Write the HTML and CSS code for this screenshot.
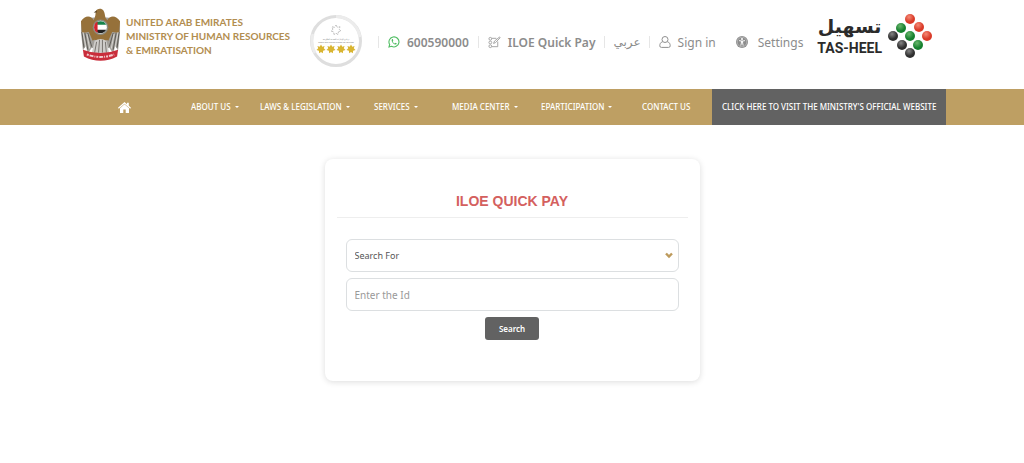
FILE: index.html
```html
<!DOCTYPE html>
<html lang="en">
<head>
  <meta charset="UTF-8" />
  <meta name="viewport" content="width=device-width, initial-scale=1.0"/>
  <title>ILOE Quick Pay</title>
  <link rel="stylesheet" href="styles.css">
</head>
<body>
  <header class="header">
    <a href="#" class="ministry">
      <svg class="emblem" viewBox="0 0 42 54" aria-hidden="true">
        <!-- wings -->
        <path d="M17 9 C10 9 5 10 1 14 L1 24 L3 43 L6 38 L8 46 L12 40 L21 44 L30 40 L34 46 L36 38 L39 43 L41 24 L41 14 C37 10 32 9 25 9 Z" fill="#a3a09b"/>
        <path d="M14 12 C12 7 5 6 1 13 L2 25 L9 24 L13 33 L17 30 L21 34 L25 30 L29 33 L33 24 L40 25 L41 13 C37 6 30 7 28 12 Z" fill="#96713a"/>
        <path d="M2 24 L4 40 M5 25 L8 42 M8 25 L12 39 M40 24 L38 40 M37 25 L34 42 M34 25 L30 39" stroke="#5d5a55" stroke-width="1" fill="none"/>
        <path d="M3 24 L6 39 M7 26 L10 41 M39 24 L36 39 M35 26 L32 41" stroke="#d8d6d2" stroke-width="1" fill="none"/>
        <!-- head and body -->
        <path d="M14 12 C16 8 16 5 16 3 C17 0 22 -1 24 2 C26 5 25 9 28 12 L29 31 L23 35 L13 31 Z" fill="#96713a"/>
        <path d="M17 2 L14 4 L17 4 Z" fill="#4b3a21"/>
        <path d="M15 33 Q21 29 27 33 L30 46 L12 46 Z" fill="#cfcdca"/>
        <path d="M17 34 L15 45 M20 32 L19 45 M23 32 L23 45 M26 34 L27 45" stroke="#77736e" fill="none"/>
        <circle cx="21" cy="19" r="8" fill="#8b8a80"/>
        <circle cx="21" cy="19" r="6.5" fill="#fff"/>
        <path d="M15.2 16.5 A6.5 6.5 0 0 1 26.8 16.5 Z" fill="#15834b"/>
        <path d="M15.2 21.5 A6.5 6.5 0 0 0 26.8 21.5 Z" fill="#222"/>
        <path d="M18 13.2 A6.5 6.5 0 0 0 18 24.8 Z" fill="#d4242f"/>
        <!-- ribbon -->
        <path d="M3 42 Q21 49 39 42 L38 49 Q21 58 4 49 Z" fill="#c92d3b"/>
        <path d="M7 47 Q21 52 35 47" stroke="#f2c9cc" stroke-width="2" stroke-dasharray="2 1 4 1 1 1" fill="none"/>
      </svg>
      <span class="ministry-name">UNITED ARAB EMIRATES<br>MINISTRY OF HUMAN RESOURCES<br>&amp; EMIRATISATION</span>
    </a>

    <svg class="seal" viewBox="0 0 54 54" role="img" aria-label="Four star rating">
      <defs>
        <path id="star" d="M0 -5 L1.4 -2.6 L4 -3.3 L3.1 -.7 L5 1 L2.4 1.9 L2 4.6 L0 3.2 L-2 4.6 L-2.4 1.9 L-5 1 L-3.1 -.7 L-4 -3.3 L-1.4 -2.6 Z"/>
      </defs>
      <circle cx="27" cy="27" r="24.5" fill="#fff" stroke="#dedede" stroke-width="3"/>
      <path d="M27 2.5 A24.5 24.5 0 0 1 51 23 M6 39 A24.5 24.5 0 0 1 4 20" fill="none" stroke="#ececec" stroke-width="3"/>
      <use href="#star" x="27" y="16" fill="none" stroke="#c4c4c4" stroke-width="1" stroke-dasharray="3 1"/>
      <text x="27" y="26" class="seal-text">برنامج الإمارات للخدمة الحكومية</text>
      <text x="27" y="29" class="seal-text">Global Star Rating System for Services</text>
      <g fill="#d9b531">
        <use href="#star" transform="translate(12 35) scale(.9)"/>
        <use href="#star" transform="translate(22 35) scale(.9)"/>
        <use href="#star" transform="translate(32 35) scale(.9)"/>
        <use href="#star" transform="translate(42 35) scale(.9)"/>
      </g>
    </svg>

    <div class="tools">
      <a href="#" class="tool strong">
        <svg class="icon-sm" viewBox="0 0 12 12" aria-hidden="true">
          <path d="M1 11 L1.7 8.5 A5 5 0 1 1 3.6 10.3 Z" fill="none" stroke="#4fbd62" stroke-width="1.1"/>
          <path d="M4.2 3.1 C3 4.2 3.8 6 5 7.2 C6.4 8.6 8 9.2 9 7.8 L7.5 6.8 L6.7 7.5 C5.8 7.1 5 6.3 4.7 5.5 L5.3 4.7 L4.8 3.1 Z" fill="#4fbd62"/>
        </svg>
        600590000
      </a>
      <a href="#" class="tool strong">
        <svg class="icon-md" viewBox="0 0 14 14" fill="none" stroke="#a0a0a0" stroke-width="1" aria-hidden="true">
          <circle cx="2.5" cy="3" r="1.5"/>
          <circle cx="2.5" cy="7" r="1.5"/>
          <circle cx="2.5" cy="11" r="1.5"/>
          <path d="M4 2.5 H9 M4 11.5 H10.5 V6 M6 8 L7 5.5 L12.5 1 L13 2 L8 7.2 Z"/>
        </svg>
        ILOE Quick Pay
      </a>
      <a href="#" class="tool arabic" lang="ar">عربي</a>
      <a href="#" class="tool">
        <svg class="icon-sm" viewBox="0 0 12 12" fill="none" stroke="#909090" stroke-width="1" aria-hidden="true">
          <circle cx="6" cy="3.5" r="3"/>
          <path d="M3.6 5.8 C1.5 6.2 .8 8 .8 9.8 Q.8 11.4 2.4 11.4 H9.6 Q11.2 11.4 11.2 9.8 C11.2 8 10.5 6.2 8.4 5.8"/>
        </svg>
        Sign in
      </a>
      <a href="#" class="tool settings">
        <svg class="icon-sm" viewBox="0 0 12 12" aria-hidden="true">
          <circle cx="6" cy="6" r="6" fill="#8c8c8c"/>
          <circle cx="6" cy="6" r="4.8" fill="none" stroke="#c9c9c9" stroke-width=".6"/>
          <circle cx="6" cy="2.9" r="1" fill="#fff"/>
          <path d="M3 4.6 L6 5.1 L9 4.6 M5.4 5 V7 L4.8 9.6 M6.6 5 V7 L7.2 9.6 M6 5 V7" fill="none" stroke="#fff" stroke-width=".9"/>
        </svg>
        Settings
      </a>
    </div>

    <a href="#" class="tasheel">
      <span class="tasheel-name">
        <span class="tasheel-ar" lang="ar">تسهيل</span>
        <span class="tasheel-en">TAS-HEEL</span>
      </span>
      <svg class="dots" viewBox="0 0 44 46" aria-hidden="true">
        <defs>
          <radialGradient id="red" cx=".4" cy=".3"><stop offset="0" stop-color="#f58a76"/><stop offset="1" stop-color="#d93a28"/></radialGradient>
          <radialGradient id="green" cx=".4" cy=".3"><stop offset="0" stop-color="#69b56c"/><stop offset="1" stop-color="#16802f"/></radialGradient>
          <radialGradient id="black" cx=".4" cy=".3"><stop offset="0" stop-color="#858585"/><stop offset="1" stop-color="#2f2f2f"/></radialGradient>
        </defs>
        <g fill="url(#red)"><circle cx="22" cy="6" r="5"/><circle cx="31" cy="14" r="5"/><circle cx="39" cy="23" r="5"/></g>
        <g fill="url(#green)"><circle cx="13" cy="15" r="5"/><circle cx="22" cy="23" r="5"/><circle cx="30" cy="32" r="5"/></g>
        <g fill="url(#black)"><circle cx="5" cy="23" r="5"/><circle cx="14" cy="32" r="5"/><circle cx="22" cy="40" r="5"/></g>
      </svg>
    </a>
  </header>

  <nav class="navbar">
    <a href="#" aria-label="Home">
      <svg class="home" viewBox="0 0 13 11" fill="#fff" aria-hidden="true">
        <path d="M6.5 0 L9 2.2 V.8 H10.8 V3.8 L13 5.8 L12.2 6.7 L6.5 1.7 L.8 6.7 L0 5.8 Z"/>
        <path d="M6.5 2.2 L11 6.2 V11 H7.7 V7.5 H5.3 V11 H2 V6.2 Z"/>
      </svg>
    </a>
    <a href="#" class="drop">ABOUT US</a>
    <a href="#" class="drop">LAWS &amp; LEGISLATION</a>
    <a href="#" class="drop">SERVICES</a>
    <a href="#" class="drop">MEDIA CENTER</a>
    <a href="#" class="drop">EPARTICIPATION</a>
    <a href="#">CONTACT US</a>
    <a href="#" class="official">CLICK HERE TO VISIT THE MINISTRY'S OFFICIAL WEBSITE</a>
  </nav>

  <main class="card">
    <h1>ILOE QUICK PAY</h1>
    <form class="search-form">
      <select class="field" aria-label="Search For">
        <option>Search For</option>
      </select>
      <input class="field" type="text" aria-label="Id" placeholder="Enter the Id">
      <button type="button" class="search">Search</button>
    </form>
  </main>
</body>
</html>
```

FILE: styles.css
```css
* { box-sizing: border-box; }

body {
  margin: 0;
  background: #fff;
  font-family: "Noto Sans", "DejaVu Sans", sans-serif;
  font-size: 12px;
  color: #555;
}

a {
  color: inherit;
  text-decoration: none;
}

svg {
  display: block;
  flex: none;
}

/* header */
.header {
  display: flex;
  align-items: flex-start;
  padding: 8px 80px 0;
  min-height: 89px;
  white-space: nowrap;
}

.ministry {
  display: flex;
  flex: none;
  gap: 5px;
  width: 229px;
}

.emblem {
  width: 41px;
  height: 54px;
}

.ministry-name {
  padding-top: 7px;
  font-family: Lato, sans-serif;
  font-size: 10px;
  line-height: 14px;
  font-weight: bold;
  color: #b28d50;
}

.seal {
  width: 54px;
  height: 54px;
  margin-top: 6px;
}

.seal-text {
  font-size: 2px;
  text-anchor: middle;
  fill: #777;
}

.tools {
  display: flex;
  margin-top: 28px;
  padding-left: 15px;
}

.tool {
  display: flex;
  align-items: center;
  height: 12px;
  padding: 0 9px;
  border-left: 1px solid #e6e6e6;
  gap: 7px;
  color: #8c8c8c;
}

.strong { font-weight: 600; }

.arabic {
  padding: 0 8px;
  font-family: "DejaVu Sans", sans-serif;
}

.settings {
  border-left: 0;
  padding-left: 11px;
  gap: 10px;
}

.icon-sm {
  width: 12px;
  height: 12px;
}

.icon-md {
  width: 13px;
  height: 13px;
}

.tasheel {
  display: flex;
  gap: 6px;
  margin-left: auto;
  margin-top: 5px;
  margin-right: 12px;
  color: #2b2b2b;
}

.tasheel-name {
  display: flex;
  flex-direction: column;
  align-items: center;
  font-weight: bold;
}

.tasheel-ar {
  font-family: "DejaVu Sans", sans-serif;
  font-size: 19px;
  line-height: 26px;
}

.tasheel-en {
  font-family: Roboto, sans-serif;
  font-size: 14px;
  line-height: 18px;
}

.dots {
  width: 44px;
  height: 46px;
}

/* navigation */
.navbar {
  display: grid;
  grid-template-columns: 73px 69px 114px 78px 89px 101px 70px auto;
  justify-content: start;
  align-items: center;
  height: 36px;
  padding-left: 118px;
  background: #be9f63;
  color: #fff;
  font-size: 8px;
  font-weight: 500;
  line-height: 10px;
  white-space: nowrap;
}

.home {
  width: 13px;
  height: 11px;
}

.drop::after {
  content: "";
  display: inline-block;
  margin-left: 4px;
  vertical-align: 2px;
  border: 2px solid transparent;
  border-top-color: #fff;
  border-bottom: 0;
}

.official {
  padding: 0 10px;
  line-height: 36px;
  background: #626262;
}

/* quick pay card */
.card {
  width: 90%;
  max-width: 375px;
  margin: 34px auto;
  padding: 31px 12px 41px;
  border-radius: 8px;
  background: #fff;
  box-shadow: 0 1px 6px rgba(0,0,0,0.14);
}

h1 {
  margin: 0;
  padding-bottom: 4px;
  border-bottom: 1px solid #eee;
  text-align: center;
  font-family: "Liberation Sans", Arial, sans-serif;
  font-size: 14px;
  line-height: 23px;
  color: #d4605e;
}

.search-form {
  display: flex;
  flex-direction: column;
  align-items: center;
  gap: 6px;
  padding: 21px 9px 0;
}

.field {
  width: 100%;
  height: 33px;
  padding: 0 8px;
  border: 1px solid #dcdfe1;
  border-radius: 6px;
  background: #fff;
  font-family: inherit;
  font-size: 10px;
  color: #555;
}

select.field {
  appearance: none;
  background: #fff url("data:image/svg+xml,%3Csvg xmlns='http://www.w3.org/2000/svg' width='8' height='7' viewBox='0 0 8 7'%3E%3Cpath d='M1 1.5L4 4.5L7 1.5' fill='none' stroke='%23bd9a5c' stroke-width='2.4'/%3E%3C/svg%3E") no-repeat right 5px center;
  font-size: 9px;
}

.field::placeholder { color: #999; }

.search {
  height: 23px;
  padding: 0 14px;
  border: 0;
  border-radius: 3px;
  background: #626262;
  color: #fff;
  font-family: inherit;
  font-size: 8px;
  font-weight: 600;
  cursor: pointer;
}
```
